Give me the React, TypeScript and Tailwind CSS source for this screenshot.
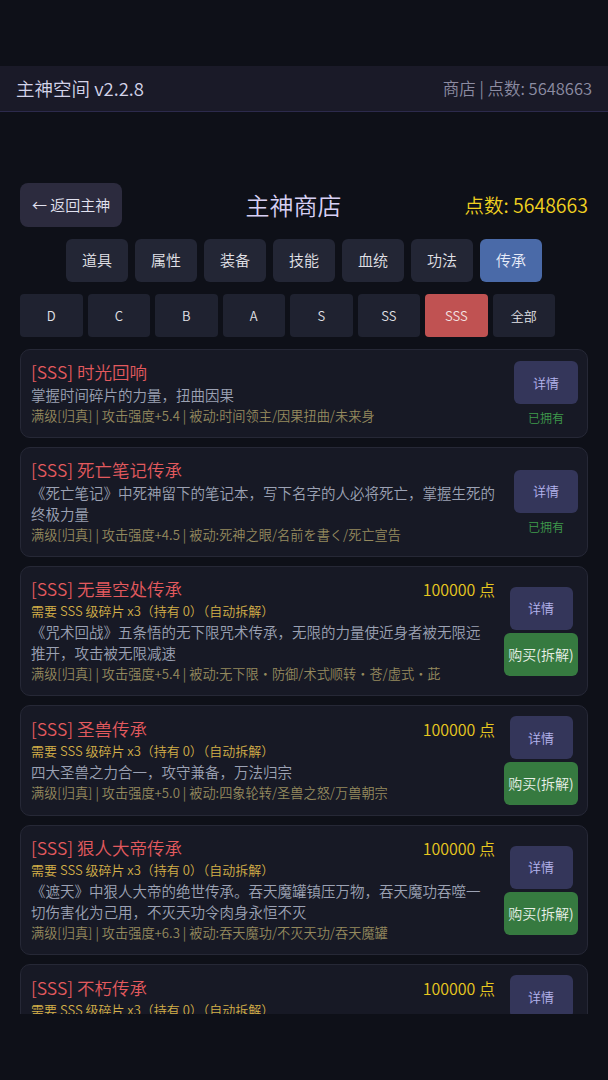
import React from 'react';

type Item = {
  name: string;
  desc: string;
  stats: string;
  owned?: boolean;
  price?: number;
};

const categories = ['道具', '属性', '装备', '技能', '血统', '功法', '传承'];
const grades = ['D', 'C', 'B', 'A', 'S', 'SS', 'SSS', '全部'];

const items: Item[] = [
  {
    name: '时光回响',
    desc: '掌握时间碎片的力量，扭曲因果',
    stats: '满级[归真] | 攻击强度+5.4 | 被动:时间领主/因果扭曲/未来身',
    owned: true,
  },
  {
    name: '死亡笔记传承',
    desc: '《死亡笔记》中死神留下的笔记本，写下名字的人必将死亡，掌握生死的终极力量',
    stats: '满级[归真] | 攻击强度+4.5 | 被动:死神之眼/名前を書く/死亡宣告',
    owned: true,
  },
  {
    name: '无量空处传承',
    desc: '《咒术回战》五条悟的无下限咒术传承，无限的力量使近身者被无限远推开，攻击被无限减速',
    stats: '满级[归真] | 攻击强度+5.4 | 被动:无下限·防御/术式顺转·苍/虚式·茈',
    price: 100000,
  },
  {
    name: '圣兽传承',
    desc: '四大圣兽之力合一，攻守兼备，万法归宗',
    stats: '满级[归真] | 攻击强度+5.0 | 被动:四象轮转/圣兽之怒/万兽朝宗',
    price: 100000,
  },
  {
    name: '狠人大帝传承',
    desc: '《遮天》中狠人大帝的绝世传承。吞天魔罐镇压万物，吞天魔功吞噬一切伤害化为己用，不灭天功令肉身永恒不灭',
    stats: '满级[归真] | 攻击强度+6.3 | 被动:吞天魔功/不灭天功/吞天魔罐',
    price: 100000,
  },
  {
    name: '不朽传承',
    desc: '不朽之躯，万古长存',
    stats: '满级[归真] | 攻击强度+5.8 | 被动:不朽/长存/万古',
    price: 100000,
  },
];

const ItemCard: React.FC<{ item: Item }> = ({ item }) => (
  <div className="flex shrink-0 items-center gap-[9px] rounded-[10px] border border-[#262836] bg-[#171925] py-[10px] pl-[10px] pr-[9px]">
    <div className="min-w-0 flex-1">
      <div className="flex items-center justify-between">
        <span className="text-[17.5px] leading-6 text-[#e35a5e]">[SSS] {item.name}</span>
        {item.price && <span className="text-[16px] leading-6 text-[#e8c820]">{item.price} 点</span>}
      </div>
      {item.price && (
        <div className="text-[13px] leading-5 text-[#d4b048]">需要 SSS 级碎片 x3（持有 0）（自动拆解）</div>
      )}
      <div className={item.price ? 'pr-[10px] text-[14.5px] leading-[21px] text-[#9ca2b4]' : 'text-[14.5px] leading-[21px] text-[#9ca2b4]'}>
        {item.desc}
      </div>
      <div className="text-[13.2px] leading-[22px] text-[#958a5e]">{item.stats}</div>
    </div>
    {item.owned ? (
      <div className="flex w-16 flex-col items-center gap-[6px]">
        <button className="h-[43px] w-16 rounded-md bg-[#34365a] text-[13px] text-[#b4b4ee]">详情</button>
        <span className="text-[12px] leading-4 text-[#3f9b4c]">已拥有</span>
      </div>
    ) : (
      <div className="flex w-[74px] flex-col items-center gap-[3px]">
        <button className="h-[43px] w-[63px] rounded-md bg-[#34365a] text-[13px] text-[#b4b4ee]">详情</button>
        <button className="h-[43px] w-[74px] rounded-md bg-[#367a40] text-[14px] text-[#e8f0e8]">购买(拆解)</button>
      </div>
    )}
  </div>
);

export default function App() {
  return (
    <div
      className="h-[1080px] w-full overflow-hidden bg-[#0e1018] pt-[66px] font-[350]"
      style={{ fontFamily: '"Noto Sans CJK SC", "Noto Sans", sans-serif' }}
    >
      <div className="flex h-[46px] items-center justify-between border-b border-[#2c2a4c] bg-[#1a1a28] px-4">
        <span className="text-[18.5px] text-[#d4d4ea]">主神空间 v2.2.8</span>
        <span className="text-[16.5px] text-[#8c8ca2]">商店 | 点数: 5648663</span>
      </div>

      <div className="px-5 pt-[71px]">
        <div className="flex h-[44px] items-center justify-between">
          <button className="h-[44px] rounded-lg bg-[#2c2b3e] px-[12px] text-[15px] text-[#e2e2f0]">← 返回主神</button>
          <span className="text-[24px] text-[#d8d0f5]">主神商店</span>
          <span className="text-[19.5px] text-[#f0d020]">点数: 5648663</span>
        </div>

        <div className="mt-3 flex justify-center gap-[7px]">
          {categories.map((c) => (
            <button
              key={c}
              className={
                c === '传承'
                  ? 'h-[43px] w-[62px] rounded-md bg-[#4a6aa8] text-[15px] text-[#e8ecf8]'
                  : 'h-[43px] w-[62px] rounded-md bg-[#232635] text-[15px] text-[#e2e2e8]'
              }
            >
              {c}
            </button>
          ))}
        </div>

        <div className="mt-3 flex gap-[5px]">
          {grades.map((g) => (
            <button
              key={g}
              className={
                g === 'SSS'
                  ? 'h-[43px] w-[62.5px] rounded-[4px] bg-[#c05252] text-[13px] text-[#f4e4e4]'
                  : 'h-[43px] w-[62.5px] rounded-[4px] bg-[#1f2230] text-[13px] text-[#e2e2e8]'
              }
            >
              {g}
            </button>
          ))}
        </div>

        <div className="mt-3 flex h-[665px] flex-col gap-[9px] overflow-hidden">
          {items.map((it) => (
            <ItemCard key={it.name} item={it} />
          ))}
        </div>
      </div>
    </div>
  );
}
